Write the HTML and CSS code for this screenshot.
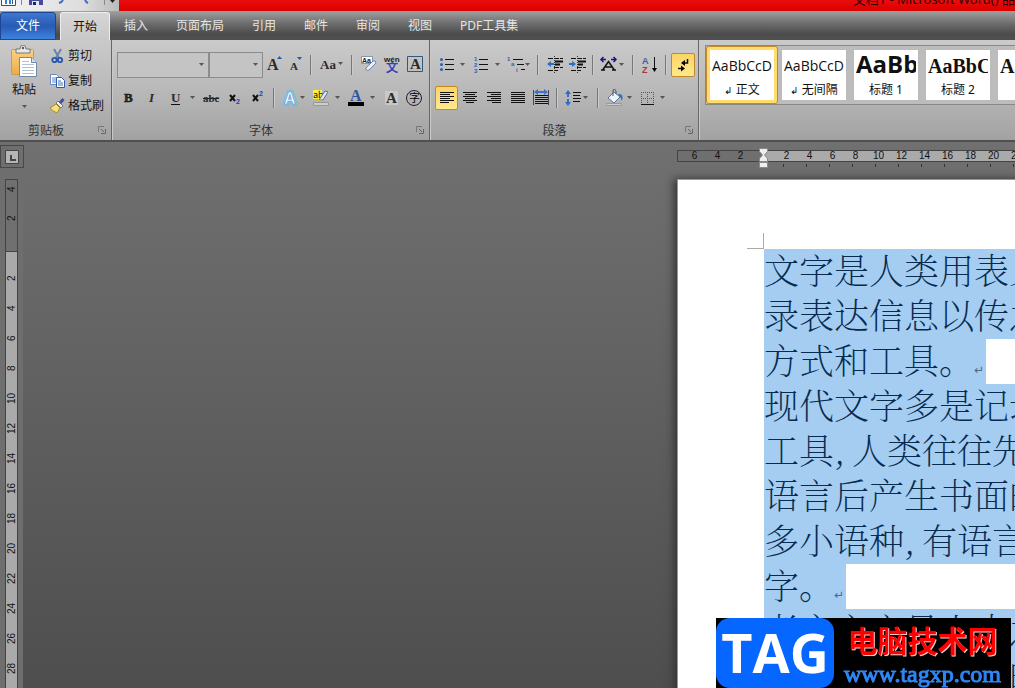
FILE: index.html
```
<!DOCTYPE html>
<html lang="zh-CN">
<head>
<meta charset="utf-8">
<title>文档1 - Microsoft Word</title>
<link rel="stylesheet" href="styles.css">
</head>
<body>
<svg class="defs" aria-hidden="true">
  <defs>
    <linearGradient id="clip" x2="0" y2="1"><stop stop-color="#fbd184"/><stop offset="1" stop-color="#e9ad4a"/></linearGradient>
    <symbol id="launcher" viewBox="0 0 8 8"><path d="M.5 6V.5H6" fill="none" stroke="#777"/><path d="M3 3l3 3M7.500 3v4.500H3" fill="none" stroke="#666"/></symbol>
    <symbol id="arrow" viewBox="0 0 5 3"><path d="M0 0h5L2.500 3z" fill="#555"/></symbol>
  </defs>
</svg>
<header class="titlebar">
  <div class="quick">
    <svg width="119" height="11" viewBox="0 0 119 11">
      <path d="M1.500 0v5.500h14V0" fill="#fff" stroke="#2b4f92"/><path d="M5 0h2v4H5zM9 0h2v4H9z" fill="#2f83d6"/><path d="M12 0h1v4h-1z" fill="#2b4f92"/>
      <path d="M21.500 0v5" stroke="#888"/>
      <path d="M29 0h14v5H29z" fill="#47499c"/><path d="M32 1h7v4h-7z" fill="#dfe4f5"/><path d="M33 2h3v3h-3z" fill="#22245e"/>
      <path d="M63 0q-1 2-4 3M85 0q1 2 3 3" fill="none" stroke="#3b6fc9" stroke-width="2"/>
      <path d="M104.500 0v5" stroke="#888"/><path d="M110 0h5l-2.500 3z" fill="#222"/>
    </svg>
  </div>
  <div class="title"><span>文档1 - Microsoft Word() 品</span></div>
</header>
<nav class="tabs">
  <button class="tab file">文件</button>
  <button class="tab active">开始</button>
  <button class="tab">插入</button>
  <button class="tab">页面布局</button>
  <button class="tab">引用</button>
  <button class="tab">邮件</button>
  <button class="tab">审阅</button>
  <button class="tab">视图</button>
  <button class="tab">PDF工具集</button>
</nav>
<div class="ribbon">
  <section class="group clipboard">
    <div class="clip-body">
      <button class="paste">
        <svg width="28" height="32" viewBox="0 0 28 32">
          <rect x="1.500" y="4.500" width="22" height="25" rx="1" fill="url(#clip)" stroke="#cf9a45"/>
          <path d="M6 8V4h4q0-4 3-4t3 4h4v4z" fill="#e8e8e8" stroke="#777"/><circle cx="13" cy="3" r="1.200" fill="#555"/>
          <path d="M9.500 12.500h12l5 5v14h-17z" fill="#fff" stroke="#7388a3"/><path d="M21.500 12.500v5h5" fill="#d8e2ef" stroke="#7388a3"/>
          <path d="M12 16.500h7M12 19.500h12M12 22.500h12M12 25.500h12M12 28.500h12" stroke="#b4bfd0"/>
        </svg>
        <span>粘贴</span>
        <svg width="5" height="3"><use href="#arrow"/></svg>
      </button>
      <div class="clip-list">
        <button><svg width="15" height="16" viewBox="0 0 15 16"><path d="M4 1l5 9M11 1L6 10" stroke="#6684ad" stroke-width="2"/><circle cx="4.500" cy="12" r="2.200" fill="none" stroke="#2857a8" stroke-width="1.800"/><circle cx="10" cy="12" r="2.200" fill="none" stroke="#2857a8" stroke-width="1.800"/></svg>剪切</button>
        <button><svg width="15" height="16" viewBox="0 0 15 16"><path d="M.5 1.500h6l2 2v8h-8z" fill="#fff" stroke="#6a8cc0"/><path d="M2 5h4M2 7h4M2 9h4" stroke="#5a83c4"/><path d="M6.500 4.500h5l3 3v7h-8z" fill="#fff" stroke="#2e5bab"/><path d="M8 8h3M8 10h5M8 12h5" stroke="#3f72c2"/></svg>复制</button>
        <button><svg width="15" height="16" viewBox="0 0 15 16"><path d="M0 10l6-4 4 4-3 5q-3-1-7-5z" fill="#f5e27c" stroke="#a98b2d"/><path d="M6 5l2-2 5 5-2 2z" fill="#eee" stroke="#777"/><path d="M10 5l3.500-4" stroke="#44508c" stroke-width="3"/></svg>格式刷</button>
      </div>
    </div>
    <footer>剪贴板<button class="launch" aria-label="剪贴板选项"><svg width="8" height="8"><use href="#launcher"/></svg></button></footer>
  </section>

  <section class="group font">
    <div class="row font-one">
      <button class="combo" aria-label="字体名称"><svg width="5" height="3"><use href="#arrow"/></svg></button>
      <button class="combo" aria-label="字号"><svg width="5" height="3"><use href="#arrow"/></svg></button>
      <button aria-label="增大字体"><svg width="22" height="24"><text x="4" y="17" class="sb" font-size="16">A</text><path d="M14 6h5l-2.500-3z" fill="#2456b0"/></svg></button>
      <button aria-label="缩小字体"><svg width="20" height="24"><text x="5" y="17" class="sb" font-size="11">A</text><path d="M12 4h5l-2.500 3z" fill="#2456b0"/></svg></button>
      <i class="sep"></i>
      <button aria-label="更改大小写"><svg width="30" height="24"><text x="3" y="16" class="sb" font-size="13">Aa</text><use href="#arrow" x="21" y="9" width="5" height="3"/></svg></button>
      <i class="sep"></i>
      <button aria-label="清除格式"><svg width="24" height="24"><path d="M4.500 3.500h11v7h-11z" fill="#fff" stroke="#8796aa"/><text x="5" y="10" class="ss" font-size="7" fill="#222">Aa</text><path d="M9 15l7-7q3-1 3 2l-7 7q-4 1-3-2z" fill="#e9effa" stroke="#6d83a8"/></svg></button>
      <button aria-label="拼音指南"><svg width="24" height="24"><text x="3" y="9" class="ss" font-size="8" fill="#222">wén</text><text x="5" y="19" class="cjk" font-size="12" fill="#2437b8" stroke="#2437b8" stroke-width=".4">文</text></svg></button>
      <button aria-label="字符边框"><svg width="23" height="24"><path d="M3.500 3.500h15v15h-15z" fill="none" stroke="#36577d"/><text x="6" y="16" class="sb" font-size="15">A</text></svg></button>
    </div>
    <div class="row font-two">
      <button aria-label="加粗"><svg width="23" height="24"><text x="7" y="16" class="sb" font-size="13" stroke="#111" stroke-width=".5">B</text></svg></button>
      <button aria-label="倾斜"><svg width="23" height="24"><text x="9" y="16" class="sb" font-size="13" font-style="italic">I</text></svg></button>
      <button aria-label="下划线"><svg width="35" height="24"><text x="8" y="16" class="sb" font-size="13">U</text><path d="M8 18.500h9" stroke="#111"/><use href="#arrow" x="27" y="10" width="5" height="3"/></svg></button>
      <button aria-label="删除线"><svg width="26" height="24"><text x="5" y="16" class="sb" font-size="11">abc</text><path d="M5 12.500h16" stroke="#222"/></svg></button>
      <button aria-label="下标"><svg width="23" height="24"><path d="M6 9l5 6M11 9l-5 6" stroke="#111" stroke-width="2"/><text x="12" y="18" class="ss" font-size="7" fill="#1745c4">2</text></svg></button>
      <button aria-label="上标"><svg width="23" height="24"><path d="M6 9l5 6M11 9l-5 6" stroke="#111" stroke-width="2"/><text x="12" y="10" class="ss" font-size="7" fill="#1745c4">2</text></svg></button>
      <i class="sep"></i>
      <button aria-label="文本效果"><svg width="32" height="24"><text x="7" y="18" class="ss" font-size="16" fill="#fff" stroke="#72bfe6" stroke-width="5" stroke-linejoin="round" opacity=".7">A</text><text x="7" y="18" class="ss" font-size="16" fill="#fff" stroke="#5a98d8" stroke-width=".6">A</text><use href="#arrow" x="23" y="10" width="5" height="3"/></svg></button>
      <button aria-label="突出显示"><svg width="34" height="24"><path d="M4 4h9v9H4z" fill="#f8f23a"/><text x="4" y="12" class="cjk" font-size="9" fill="#111">ab</text><path d="M10 14l6-9 3 1-5 8z" fill="#dbe5f4" stroke="#5c7199"/><path d="M9 14h5l-5 1z" fill="#e8d020"/><path d="M4.500 16.500h15v3h-15z" fill="#ccc" stroke="#999"/><use href="#arrow" x="26" y="10" width="5" height="3"/></svg></button>
      <button aria-label="字体颜色"><svg width="36" height="24"><text x="7" y="15" class="sb blue" font-size="16">A</text><path d="M5 16h16v4H5z"/><use href="#arrow" x="27" y="10" width="5" height="3"/></svg></button>
      <button aria-label="字符底纹"><svg width="24" height="24"><path d="M6 5h13v14H6z" fill="#d0d0d0" opacity=".7"/><text x="7" y="17" class="sb" font-size="15">A</text></svg></button>
      <button aria-label="带圈字符"><svg width="24" height="24"><circle cx="11" cy="12" r="7.500" fill="none" stroke="#222"/><text x="6" y="16" class="cjk" font-size="11">字</text></svg></button>
    </div>
    <footer>字体<button class="launch" aria-label="字体选项"><svg width="8" height="8"><use href="#launcher"/></svg></button></footer>
  </section>

  <section class="group para">
    <div class="row para-one">
      <button aria-label="项目符号"><svg width="34" height="24"><path d="M10 6.500h9M10 11.500h9M10 16.500h9" stroke="#111"/><g fill="#2d5fae"><circle cx="6.500" cy="6.500" r="1.500"/><circle cx="6.500" cy="11.500" r="1.500"/><circle cx="6.500" cy="16.500" r="1.500"/></g><use href="#arrow" x="25" y="10" width="5" height="3"/></svg></button>
      <button aria-label="编号"><svg width="34" height="24"><path d="M10 6.500h9M10 11.500h9M10 16.500h9" stroke="#111"/><g class="ss" font-size="6" fill="#2d5fae"><text x="5" y="8">1</text><text x="5" y="14">2</text><text x="5" y="20">3</text></g><use href="#arrow" x="26" y="10" width="5" height="3"/></svg></button>
      <button aria-label="多级列表"><svg width="30" height="24"><path d="M10 6.500h10M14 11.500h7M18 16.500h4" stroke="#111"/><g class="ss" font-size="6" fill="#2d5fae"><text x="4" y="8">1</text><text x="8" y="13">a</text><text x="13" y="19">i</text></g><use href="#arrow" x="22" y="10" width="5" height="3"/></svg></button>
      <i class="sep"></i>
      <button aria-label="减少缩进"><svg width="23" height="24"><path d="M5 5.500h15M11 14.500h9M5 17.500h10" stroke="#111" stroke-dasharray="5 1"/><path d="M12 8.500h8M12 11.500h5" stroke="#111" stroke-width="2"/><path d="M11.500 3v17" stroke="#333" stroke-dasharray="1 1"/><path d="M4 11l4-3v2h3v2H8v2z" fill="#2f6ccc"/></svg></button>
      <button aria-label="增加缩进"><svg width="23" height="24"><path d="M5 5.500h15M11 14.500h9M5 17.500h10" stroke="#111" stroke-dasharray="5 1"/><path d="M12 8.500h8M12 11.500h5" stroke="#111" stroke-width="2"/><path d="M11.500 3v17" stroke="#333" stroke-dasharray="1 1"/><path d="M10 11L6 8v2H3v2h3v2z" fill="#2f6ccc"/></svg></button>
      <i class="sep"></i>
      <button aria-label="中文版式"><svg width="31" height="24"><path d="M4 17h4M15 17h4M6 16.500l5.500-8 5.500 8M8 14h7" fill="none" stroke="#111" stroke-width="1.500"/><path d="M4 6.500h5M14 6.500h5M6.500 4L4 6.500 6.500 9M16.500 4L19 6.500 16.500 9" fill="none" stroke="#15158c" stroke-width="1.500"/><use href="#arrow" x="22" y="10" width="5" height="3"/></svg></button>
      <i class="sep"></i>
      <button aria-label="排序"><svg width="23" height="24"><text x="4" y="11" class="ss" font-size="9" fill="#3561ad">A</text><text x="4" y="20" class="ss" font-size="9" fill="#a8383d">Z</text><path d="M16.500 4v13" stroke="#111"/><path d="M14 15h5l-2.500 4z"/></svg></button>
      <i class="sep"></i>
      <button class="on" aria-label="显示编辑标记"><svg width="22" height="22"><path d="M15.500 5v4h-4M6 14.500h4" fill="none" stroke="#111" stroke-width="1.500"/><path d="M9 9l4-3v6zM13 14.500l-4-3v6z"/></svg></button>
    </div>
    <div class="row para-two">
      <button class="on" aria-label="左对齐"><svg width="21" height="22"><path d="M4 5.500h14M4 7.500h10M4 9.500h14M4 11.500h10M4 13.500h14M4 15.500h9" stroke="#111"/></svg></button>
      <button aria-label="居中"><svg width="24" height="24"><path d="M5 6.500h14M7 8.500h10M5 10.500h14M7 12.500h10M5 14.500h14M8 16.500h8" stroke="#111"/></svg></button>
      <button aria-label="右对齐"><svg width="24" height="24"><path d="M5 6.500h14M9 8.500h10M5 10.500h14M9 12.500h10M5 14.500h14M10 16.500h9" stroke="#111"/></svg></button>
      <button aria-label="两端对齐"><svg width="24" height="24"><path d="M5 6.500h14M5 8.500h14M5 10.500h14M5 12.500h14M5 14.500h14M5 16.500h14" stroke="#111"/></svg></button>
      <button aria-label="分散对齐"><svg width="23" height="24"><path d="M5 9.500h13M5 11.500h13M5 13.500h13M5 15.500h13M5 17.500h13" stroke="#111"/><path d="M3.500 4v15M18.500 4v15" stroke="#445"/><path d="M4 6l4-3v2h6V3l4 3-4 3V7H8v2z" fill="#3b73cc"/></svg></button>
      <i class="sep"></i>
      <button aria-label="行距"><svg width="34" height="24"><path d="M13 6.500h8M13 9.500h7M13 12.500h8M13 15.500h7" stroke="#111"/><path d="M8 4l3 4H9v3H7V8H5zM8 20l3-4H9v-3H7v3H5z" fill="#2f6ccc"/><use href="#arrow" x="23" y="10" width="5" height="3"/></svg></button>
      <i class="sep"></i>
      <button aria-label="底纹"><svg width="35" height="24"><path d="M6 12l6-6 6 5-6 6z" fill="#eef3fa" stroke="#55779f"/><path d="M11 10V4q2-2 3 1v3" fill="none" stroke="#555"/><path d="M16 8q6-1 4 7-1-4-4-7z" fill="#2c68b8"/><path d="M4.500 17.500h15v2h-15z" fill="#ccc" stroke="#999"/><use href="#arrow" x="25" y="10" width="5" height="3"/></svg></button>
      <button aria-label="边框"><svg width="32" height="24"><path d="M4 6.500h13M4 12.500h13M4.500 6v12M10.500 6v12M16.500 6v12" stroke="#555" stroke-dasharray="1 1"/><path d="M4 18.500h13" stroke="#111"/><use href="#arrow" x="23" y="10" width="5" height="3"/></svg></button>
    </div>
    <footer>段落<button class="launch" aria-label="段落选项"><svg width="8" height="8"><use href="#launcher"/></svg></button></footer>
  </section>

  <section class="group styles">
    <div class="gallery">
      <button class="style chosen"><span class="sample">AaBbCcD</span><span class="name"><small>↲</small> 正文</span></button>
      <button class="style"><span class="sample">AaBbCcD</span><span class="name"><small>↲</small> 无间隔</span></button>
      <button class="style"><span class="sample big">AaBb</span><span class="name">标题 1</span></button>
      <button class="style"><span class="sample roman">AaBbC</span><span class="name">标题 2</span></button>
      <button class="style"><span class="sample roman">AaBbC</span><span class="name">标题</span></button>
    </div>
  </section>
</div>

<main class="workspace">
  <aside class="side">
    <button class="tabstop" aria-label="制表符"><svg width="14" height="14"><path d="M.5.5h13v13H.5z" fill="#b5b5b5" stroke="#444"/><path d="M6 5v5h5" fill="none" stroke="#444" stroke-width="2"/></svg></button>
    <div class="vruler">
      <div class="vmargin"><span>4</span><span>2</span></div>
      <div class="vbody"><span>2</span><span>4</span><span>6</span><span>8</span><span>10</span><span>12</span><span>14</span><span>16</span><span>18</span><span>20</span><span>22</span><span>24</span><span>26</span><span>28</span></div>
    </div>
  </aside>
  <div class="canvas">
    <div class="hruler">
      <div class="hmargin"><span>6</span><span>4</span><span>2</span></div>
      <div class="hbody"><span>2</span><span>4</span><span>6</span><span>8</span><span>10</span><span>12</span><span>14</span><span>16</span><span>18</span><span>20</span><span>22</span></div>
      <svg class="indent" width="9" height="20" viewBox="0 0 9 20"><path d="M.5.500h8v3l-3 3.500 3 3.500v3h-8v-3l3-3.500-3-3.500z" fill="#eee" stroke="#888"/><path d="M.5 14.500h8v5h-8z" fill="#eee" stroke="#888"/></svg>
    </div>
    <article class="page">
      <div class="corner"></div>
      <div class="text">
        <p>文字是人类用表义</p>
        <p>录表达信息以传之</p>
        <p class="end">方式和工具。<small>↵</small></p>
        <p>现代文字多是记录</p>
        <p>工具<span class="comma">,</span>人类往往先有</p>
        <p>语言后产生书面的</p>
        <p>多小语种<span class="comma">,</span>有语言但</p>
        <p class="end">字。<small>↵</small></p>
        <p>考方文字是人本之</p>
        <p>文字是人类文化的</p>
      </div>
    </article>
  </div>
</main>
<div class="watermark">
  <strong>TAG</strong>
  <div><b>电脑技术网</b><span>www.tagxp.com</span></div>
</div>
</body>
</html>
```
FILE: styles.css
```
* { box-sizing: border-box; }
body {
  margin: 0;
  height: 100vh;
  overflow: hidden;
  display: flex;
  flex-direction: column;
  background: #666;
  font: 12px/16px "Noto Sans", "Noto Sans CJK SC", sans-serif;
  color: #111;
}
button {
  margin: 0;
  padding: 0;
  border: 0;
  background: none;
  font: inherit;
  color: inherit;
}
svg { display: block; flex: none; }
.defs { width: 0; height: 0; position: absolute; }
.sb { font-family: "Liberation Serif", serif; font-weight: 700; fill: #2b2b2b; }
.sb.blue { fill: #2f55a0; }
.ss { font-family: "Liberation Sans", sans-serif; font-weight: 700; }
.cjk { font-family: "Noto Sans CJK SC", sans-serif; }

.titlebar { display: flex; height: 11px; flex: none; background: #aaa; }
.quick { width: 119px; background: linear-gradient(90deg, #f4f4f4, #ddd 70%, #bbb); }
.title {
  flex: 1;
  display: flex;
  justify-content: flex-end;
  align-items: flex-end;
  overflow: hidden;
  white-space: nowrap;
  background: linear-gradient(#ea0d0d, #d90000);
  font-size: 13px;
  line-height: 20px;
}
.title span { height: 22px; color: #300; flex: none; }

.tabs {
  display: flex;
  align-items: flex-end;
  height: 29px;
  flex: none;
  background: linear-gradient(#a0a0a0, #6b6b6b 45%, #4b4b4b 80%, #505050);
}
.tab { height: 28px; padding: 0 14px; color: #e6e6e6; white-space: nowrap; }
.tab.file {
  width: 56px;
  margin-right: 4px;
  border: 1px solid #1d4796;
  border-radius: 3px 3px 0 0;
  background: linear-gradient(#3f77cf, #285bb4 50%, #3c83e0);
  color: #fff;
}
.tab.active {
  width: 50px;
  padding: 0;
  border: 1px solid #eee;
  border-bottom: 0;
  border-radius: 3px 3px 0 0;
  background: linear-gradient(#d6d6d6, #c8c8c8);
  color: #111;
}

.ribbon {
  display: flex;
  height: 102px;
  flex: none;
  overflow: hidden;
  background: linear-gradient(#cacaca, #b9b9b9 50%, #a2a2a2);
  border-bottom: 2px solid #505050;
}
.group {
  flex: none;
  display: flex;
  flex-direction: column;
  padding: 5px 0 1px 5px;
  border-right: 1px solid #666;
  box-shadow: 1px 0 #cacaca;
}
.group footer {
  margin-top: auto;
  padding-right: 24px;
  display: flex;
  justify-content: center;
  align-items: center;
  position: relative;
  color: #333;
}
.launch { position: absolute; right: 5px; top: 3px; }
.clipboard { width: 112px; }
.font { width: 318px; }
.para { width: 269px; }
.styles { flex: 1; min-width: 0; border: 0; padding: 5px 0 0 6px; box-shadow: none; }
.clip-body { display: flex; gap: 7px; }
.paste { display: flex; flex-direction: column; align-items: center; width: 38px; }
.paste span { margin: 5px 0 7px; }
.clip-list { display: flex; flex-direction: column; gap: 9px; padding-top: 3px; }
.clip-list button { display: flex; align-items: center; gap: 3px; white-space: nowrap; }

.row { display: grid; align-items: center; height: 35px; }
.row svg { overflow: visible; }
.font-one { grid-template-columns: 92px 54px 22px 20px 12px 30px 10px 24px 23px 23px; padding-top: 4px; }
.font-two { grid-template-columns: 23px 23px 35px 26px 23px 23px 7px 32px 34px 36px 24px 24px; }
.para-one { grid-template-columns: 34px 34px 30px 10px 23px 23px 8px 31px 10px 23px 10px 24px; padding-top: 4px; }
.para-two { grid-template-columns: 23px 24px 24px 24px 23px 7px 34px 8px 35px 32px; }
.combo {
  height: 26px;
  display: flex;
  align-items: center;
  justify-content: flex-end;
  padding-right: 4px;
  border: 1px solid #8c8c8c;
  background: #c4c4c4;
}
.sep {
  justify-self: center;
  width: 2px;
  height: 20px;
  background: linear-gradient(90deg, #777 50%, #ccc 50%);
}
.on {
  border: 1px solid #c08a2c;
  border-radius: 2px;
  background: linear-gradient(#fbd465, #ffe98a);
}

.gallery {
  display: flex;
  height: 60px;
  overflow: hidden;
  border: 1px solid #888;
  border-right: 0;
  background: #bcbcbc;
}
.style {
  flex: none;
  width: 72px;
  height: 58px;
  padding: 3px;
  border: 1px solid transparent;
  display: flex;
  flex-direction: column;
}
.style.chosen { border: 1px solid #c08a2c; border-radius: 3px; background: #ffdc6b; }
.sample, .name { width: 64px; background: #fff; text-align: center; overflow: hidden; white-space: nowrap; }
.sample {
  height: 31px;
  padding: 0;
  border: solid #fff;
  border-width: 0 2px;
  text-align: left;
  font: 14px/32px "Open Sans", sans-serif;
}
.sample.big { font: 700 24px/28px "Open Sans", sans-serif; }
.sample.roman { font: 700 20px/32px "Liberation Serif", serif; }
.name { height: 19px; line-height: 18px; }
.name small { font: 10px/10px "DejaVu Sans", sans-serif; }

.workspace {
  flex: 1;
  min-height: 0;
  display: flex;
  background: linear-gradient(#707070, #4e4e4e);
}
.side {
  width: 23px;
  flex: none;
  display: flex;
  flex-direction: column;
  padding-top: 3px;
  background: #6e6e6e;
}
.tabstop {
  width: 24px;
  height: 23px;
  flex: none;
  display: grid;
  place-items: center;
  border: 1px solid #484848;
}
.vruler {
  flex: 1;
  min-height: 0;
  width: 13px;
  margin: 11px 0 0 5px;
  overflow: hidden;
  border: 1px solid #444;
  border-bottom: 0;
  background: #aaa;
}
.vmargin { height: 72px; background: #707070; border-bottom: 1px solid #444; }
.vbody { padding-top: 11px; }
.vruler span {
  display: block;
  width: 11px;
  height: 30px;
  line-height: 11px;
  font-family: "Liberation Sans", sans-serif;
  font-size: 10px;
  text-align: center;
  writing-mode: vertical-rl;
  transform: rotate(180deg);
}
.vmargin span:first-child { height: 19px; }
.vmargin span + span { height: 39px; }

.canvas { flex: 1; min-width: 0; padding: 8px 0 0 654px; overflow: hidden; }
.hruler {
  position: relative;
  display: flex;
  height: 12px;
  border: 1px solid #444;
  border-right: 0;
  font: 10px/10px "Liberation Sans", sans-serif;
  text-align: center;
}
.hmargin { display: flex; width: 86px; flex: none; padding-left: 5px; }
.hbody { display: flex; flex: 1; padding-left: 11px; background: #aaa; }
.hruler span {
  width: 23px;
  height: 16px;
  flex: none;
  background: linear-gradient(#333, #333) 8px 13px / 1px 3px no-repeat;
}
.hmargin span { background: none; }
.indent { position: absolute; left: 81px; top: -3px; }
.page {
  width: 794px;
  height: 1123px;
  margin-top: 17px;
  padding: 53px 86px;
  background: #fff;
  border: 1px solid #999;
  box-shadow: -3px 0 8px #333;
}
.corner {
  width: 17px;
  height: 16px;
  margin-left: -17px;
  border: solid #aaa;
  border-width: 0 1px 1px 0;
}
.text { width: 620px; color: #062b4f; font: 200 35px/41px "Noto Serif CJK SC", "Noto Sans CJK SC Light", "Noto Sans CJK SC", serif; }
.text p { margin: 0; height: 45px; background: #a5cdf1; white-space: nowrap; overflow: hidden; }
.text .end { width: fit-content; }
.text small { display: inline-block; width: 12px; color: #4a6b8a; font: 12px/12px "DejaVu Sans", sans-serif; }
.comma { display: inline-block; width: 18px; }

.watermark {
  position: fixed;
  right: 4px;
  bottom: 0;
  display: flex;
  width: 295px;
  height: 70px;
  background: #000;
}
.watermark strong {
  width: 118px;
  border-radius: 14px;
  background: #0567ff;
  color: #fff;
  text-align: center;
  font: 700 54px/68px "Open Sans", sans-serif;
}
.watermark div { flex: 1; display: flex; flex-direction: column; align-items: center; }
.watermark b {
  height: 43px;
  color: #f00;
  font: 700 30px/42px "Noto Sans CJK SC", sans-serif;
  text-shadow: 1px 1px #fcc;
}
.watermark span {
  color: #2f86f5;
  font: 24px/26px "Liberation Serif", serif;
  -webkit-text-stroke: 1px #2f86f5;
}
```
